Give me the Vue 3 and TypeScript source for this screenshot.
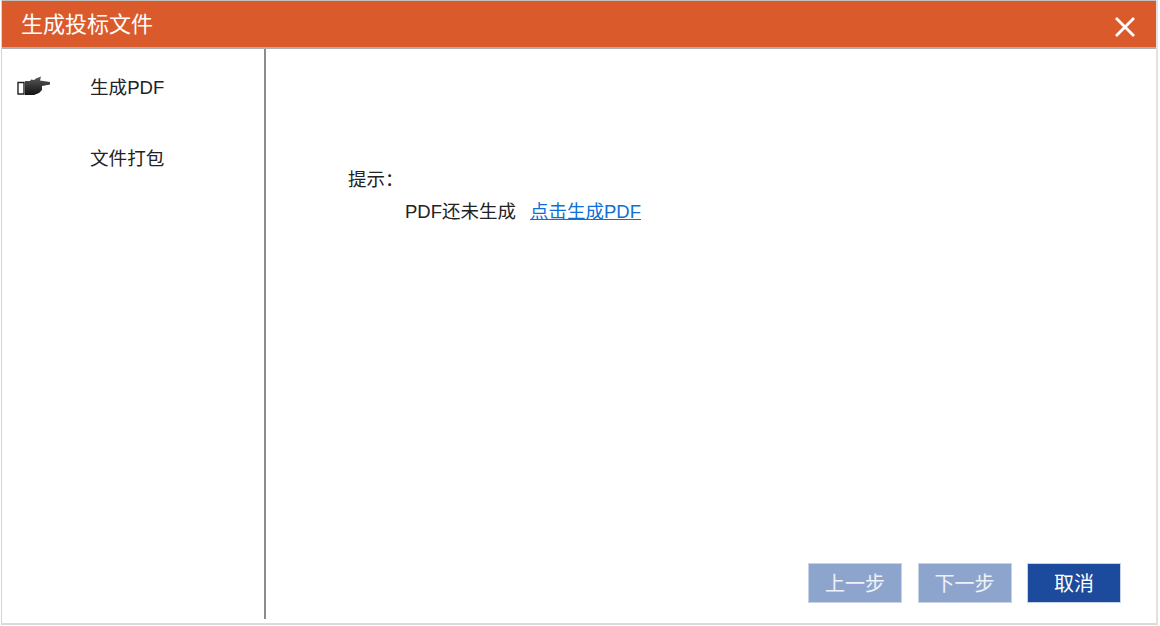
<script setup lang="ts">
import { ref } from "vue";

const steps = ref([
    { label: "生成PDF", active: true },
    { label: "文件打包", active: false },
]);
</script>

<template>
    <div class="dialog">
        <header class="dialog__header">
            <span class="dialog__title">生成投标文件</span>
            <svg class="dialog__close" width="22" height="22" viewBox="0 0 22 22">
                <path d="M2 2 L20 20 M20 2 L2 20" stroke="#fff" stroke-width="2.8" fill="none" />
            </svg>
        </header>
        <div class="dialog__body">
            <aside class="steps">
                <div v-for="step in steps" :key="step.label" class="steps__item">
                    <svg v-if="step.active" class="steps__hand" width="34" height="20" viewBox="0 0 34 20">
                        <defs>
                            <linearGradient id="hand" x1="0" y1="0" x2="0" y2="1">
                                <stop offset="0" stop-color="#5a5a5a" />
                                <stop offset="1" stop-color="#141214" />
                            </linearGradient>
                        </defs>
                        <path d="M2 6.5 H8 V18 H2 Z" fill="#fff" stroke="#222" stroke-width="1.4" />
                        <path
                            d="M9 5 L14 5 L15 3.5 L18 4 L20 2.5 L25 0.5 L24 4.5 L34 6 L34 8.5 L26 10 L26 14 L23 17 L18 19 L9 19 Z"
                            fill="url(#hand)"
                        />
                    </svg>
                    <span class="steps__label">{{ step.label }}</span>
                </div>
            </aside>
            <main class="content">
                <div class="hint">
                    <div class="hint__title">提示：</div>
                    <div class="hint__line">
                        <span>PDF还未生成</span>
                        <a class="hint__link" href="#">点击生成PDF</a>
                    </div>
                </div>
                <div class="actions">
                    <button class="btn btn--disabled">上一步</button>
                    <button class="btn btn--disabled">下一步</button>
                    <button class="btn">取消</button>
                </div>
            </main>
        </div>
    </div>
</template>

<style>
html,
body {
    margin: 0;
    background: #fff;
}
</style>

<style scoped>
.dialog {
    box-sizing: border-box;
    width: 1157px;
    height: 625px;
    margin-left: 1px;
    border-left: 1px solid #d8d4d4;
    border-right: 2px solid #e2e0e0;
    border-bottom: 2px solid #dcdada;
    display: flex;
    flex-direction: column;
    font-family: "Liberation Sans", "Noto Sans CJK SC", sans-serif;
    color: #222;
}

.dialog__header {
    box-sizing: border-box;
    height: 49px;
    flex: none;
    padding: 0 20px 0 19px;
    display: flex;
    align-items: center;
    justify-content: space-between;
    background: #db5a2b;
    border-top: 1px solid #c4c0be;
    border-bottom: 2px solid #b0aeac;
}

.dialog__title {
    font-size: 22px;
    line-height: 30px;
    padding-top: 2px;
    color: #fff;
}

.dialog__close {
    margin-top: 5px;
}

.dialog__body {
    flex: 1;
    min-height: 0;
    display: flex;
}

.steps {
    box-sizing: border-box;
    width: 264px;
    height: 570px;
    padding-top: 1px;
    border-right: 2px solid #8c8c8c;
    flex: none;
}

.steps__item {
    position: relative;
    height: 71px;
    display: flex;
    align-items: center;
    padding-left: 88px;
}

.steps__hand {
    position: absolute;
    left: 14px;
    top: 26px;
}

.steps__label {
    font-size: 18.6px;
}

.content {
    flex: 1;
    min-width: 0;
    display: flex;
    flex-direction: column;
    justify-content: space-between;
    padding: 115px 35px 20px 82px;
}

.hint {
    font-size: 18.5px;
    line-height: 31.5px;
}

.hint__line {
    padding-left: 57px;
    display: flex;
    gap: 14px;
}

.hint__link {
    color: #0f6fd8;
    text-decoration: underline;
}

.actions {
    display: flex;
    justify-content: flex-end;
    gap: 15.5px;
}

.btn {
    width: 94px;
    height: 40px;
    padding: 0 0 2px;
    border: 1px solid #c6d2e6;
    background: #1c4a9c;
    color: #fff;
    font-family: inherit;
    font-size: 20px;
}

.btn--disabled {
    background: #8da5cd;
    color: #eef2f8;
}
</style>
